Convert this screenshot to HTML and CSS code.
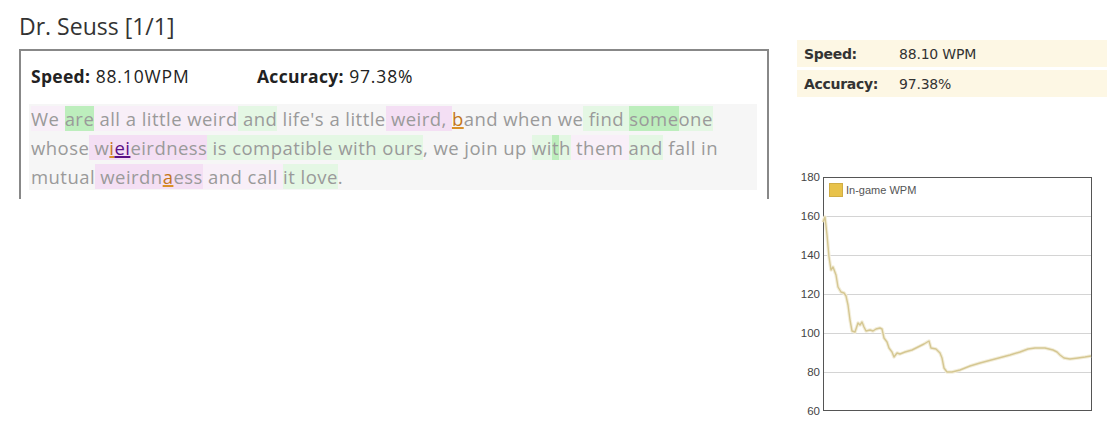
FILE: index.html
```html
<!DOCTYPE html>
<html>
<head>
<meta charset="utf-8">
<link rel="stylesheet" href="styles.css">
</head>
<body>
<div class="page">
  <div class="left">
    <h1 class="title">Dr. Seuss [1/1]</h1>
    <div class="box">
      <div class="stats">
        <span class="stat"><b>Speed:</b> 88.10WPM</span>
        <span class="stat"><b>Accuracy:</b> 97.38%</span>
      </div>
      <div class="passage"><span class="p1">We </span><span class="g2">are</span><span class="p1"> all a little weird</span><span class="g1"> and</span><span class="w"> life's a little</span><span class="p2"> weird, </span><u class="err-o">b</u><span class="w">and when we</span><span class="g1"> find </span><span class="g2">some</span><span class="g1">one</span><br><span class="w">whose</span><span class="p2"> w<u class="err-o">i</u><u class="err-p">ei</u>eirdness</span><span class="g1"> is compatible with ours</span><span class="w">, we join up </span><span class="g1">wi</span><span class="g2">t</span><span class="g1">h</span><span class="p1"> them </span><span class="g1">and</span><span class="w"> fall in</span><br><span class="w">mutual</span><span class="p2"> weirdn<u class="err-o">a</u>ess</span><span class="p1"> and call </span><span class="g1">it love</span><span class="w">.</span></div>
    </div>
  </div>
  <div class="right">
    <div class="summary">
      <div class="row"><span class="k">Speed:</span><span class="v">88.10 WPM</span></div>
      <div class="row"><span class="k">Accuracy:</span><span class="v">97.38%</span></div>
    </div>
    <svg class="chart" width="317" height="261" viewBox="0 0 317 261">
      <g stroke="#d4d4d4" stroke-width="1">
        <line x1="33" y1="51.5" x2="301" y2="51.5"/>
        <line x1="33" y1="90.5" x2="301" y2="90.5"/>
        <line x1="33" y1="129.5" x2="301" y2="129.5"/>
        <line x1="33" y1="168.5" x2="301" y2="168.5"/>
        <line x1="33" y1="207.5" x2="301" y2="207.5"/>
      </g>
      <rect x="33.5" y="12.5" width="268" height="233" fill="none" stroke="#555" stroke-width="1"/>
      <g font-family="Liberation Sans, Arial, sans-serif" font-size="11.5" fill="#444" text-anchor="end">
        <text x="30" y="16">180</text>
        <text x="30" y="55">160</text>
        <text x="30" y="94">140</text>
        <text x="30" y="133">120</text>
        <text x="30" y="172">100</text>
        <text x="30" y="211">80</text>
        <text x="30" y="250">60</text>
      </g>
      <rect x="39.5" y="18.5" width="13" height="13" fill="#e8c24a" stroke="#d0ad45"/>
      <text x="56" y="29" font-family="Liberation Sans, Arial, sans-serif" font-size="11" fill="#555">In-game WPM</text>
      <polyline fill="none" stroke="#f3eedb" stroke-width="3.5" stroke-linejoin="round" points="33,57 35,52 37,70 39,92 41,105 43,102 46,110 48,122 51,127 54,128 56,131 58,140 60,155 62,166 65,167 68,158 70,160 72,157 74,162 76,166 80,165 83,166 86,164 90,163 92,164 94,173 97,177 99,183 102,187 104,192 107,188 110,189 115,187 122,185 128,182 134,179 139,176 141,183 146,184 150,188 152,193 154,203 157,207 162,207 170,205 180,201 190,198 205,194 220,190 230,187 238,184 245,183 255,183 263,185 267,187 270,190 274,193 280,194 288,193 295,192 301,191"/>
      <polyline fill="none" stroke="#d5c792" stroke-width="1.4" stroke-linejoin="round" points="33,57 35,52 37,70 39,92 41,105 43,102 46,110 48,122 51,127 54,128 56,131 58,140 60,155 62,166 65,167 68,158 70,160 72,157 74,162 76,166 80,165 83,166 86,164 90,163 92,164 94,173 97,177 99,183 102,187 104,192 107,188 110,189 115,187 122,185 128,182 134,179 139,176 141,183 146,184 150,188 152,193 154,203 157,207 162,207 170,205 180,201 190,198 205,194 220,190 230,187 238,184 245,183 255,183 263,185 267,187 270,190 274,193 280,194 288,193 295,192 301,191"/>
    </svg>
  </div>
</div>
</body>
</html>
```
FILE: styles.css
```css
html, body {
  margin: 0;
  padding: 0;
  background: #fff;
}
.page {
  display: flex;
  width: 1107px;
  height: 426px;
  overflow: hidden;
}
.left {
  width: 790px;
  flex: none;
  padding-left: 19px;
  box-sizing: border-box;
  font-family: "Open Sans", "DejaVu Sans", sans-serif;
}
.title {
  margin: 0;
  padding-top: 11px;
  font-size: 23px;
  font-weight: normal;
  line-height: 30px;
  color: #333;
}
.box {
  margin-top: 8px;
  width: 750px;
  height: 150px;
  box-sizing: border-box;
  border: 2px solid #888;
  border-bottom: none;
  padding: 0 8px 0 10px;
}
.stats {
  display: flex;
  height: 50px;
  padding-bottom: 3px;
  align-items: center;
  font-size: 17.5px;
  color: #222;
  letter-spacing: 0.85px;
}
.stat {
  width: 226px;
}
.stat b {
  font-weight: 700;
  letter-spacing: 0.3px;
}
.passage {
  margin-left: -2px;
  width: 728px;
  height: 86px;
  box-sizing: border-box;
  padding: 0 2px;
  background: #f6f6f6;
  font-size: 18.5px;
  line-height: 29px;
  color: #9a9a9a;
  letter-spacing: 0.45px;
  white-space: nowrap;
}
.g1 { background: #e4f7e4; }
.g2 { background: #bdeebd; }
.p1 { background: #f8eff8; }
.p2 { background: #f4dff4; }
.w { background: transparent; }
.err-o {
  color: #c4761a;
  text-decoration: underline;
  text-decoration-color: #d9902a;
  text-decoration-thickness: 2px;
}
.err-p {
  color: #5b0f86;
  text-decoration: underline;
  text-decoration-thickness: 2px;
}
.right {
  flex: 1;
  display: flex;
  flex-direction: column;
}
.summary {
  margin-top: 40px;
  margin-left: 7px;
  display: flex;
  flex-direction: column;
  gap: 3px;
  font-family: "DejaVu Sans", Verdana, sans-serif;
  font-size: 14px;
  color: #333;
}
.row {
  display: flex;
  align-items: center;
  height: 27px;
  background: #fdf7e4;
  padding-left: 7px;
}
.k {
  width: 95px;
  font-weight: bold;
  letter-spacing: -0.3px;
}
.v {
  letter-spacing: -0.2px;
}
.chart {
  display: block;
  margin-top: 68px;
}
```
